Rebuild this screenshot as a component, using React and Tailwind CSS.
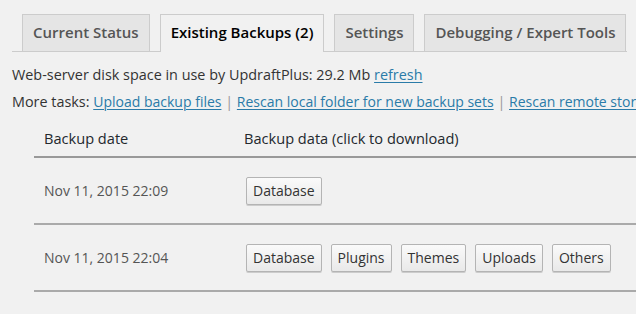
import React from "react";

const Tab = ({ children, active }) => (
  <div
    className={
      "h-[37px] px-[10px] border border-b-0 border-[#cccccc] text-[15px] font-semibold leading-[35px] " +
      (active ? "bg-[#f1f1f1] text-[#000000] -mb-px h-[38px]" : "bg-[#e5e5e5] text-[#555555]")
    }
  >
    {children}
  </div>
);

const Btn = ({ children }) => (
  <button className="h-[28px] px-[6px] border border-[#b4b4b4] rounded-[2px] bg-gradient-to-b from-[#fafafa] to-[#e9e9e9] text-[14px] text-[#333333] leading-[26px] shadow-[0_1px_0_#cccccc]">
    {children}
  </button>
);

const Link = ({ children, small }) => (
  <a
    className={
      "text-[#2a7ba8] underline underline-offset-2 decoration-1 cursor-pointer " +
      (small ? "text-[14px]" : "")
    }
  >
    {children}
  </a>
);

export default function App() {
  const rows = [
    { date: "Nov 11, 2015 22:09", items: ["Database"] },
    { date: "Nov 11, 2015 22:04", items: ["Database", "Plugins", "Themes", "Uploads", "Others"] },
  ];
  return (
    <div
      className="w-[636px] h-[314px] overflow-hidden bg-[#f1f1f1] pl-[12px]"
      style={{ fontFamily: '"Open Sans", "Noto Sans", sans-serif' }}
    >
      <div className="pt-[14px] w-[615px] flex items-end gap-[10px] pl-[10px] border-b border-[#cccccc] h-[52px]">
        <Tab>Current Status</Tab>
        <Tab active>Existing Backups (2)</Tab>
        <Tab>Settings</Tab>
        <Tab>Debugging / Expert Tools</Tab>
      </div>
      <div className="text-[14.4px] leading-[27px] text-[#333333] pt-[9px] whitespace-nowrap">
        <div>
          Web-server disk space in use by UpdraftPlus: 29.2 Mb <Link>refresh</Link>
        </div>
        <div>
          More tasks: <Link small>Upload backup files</Link> <span className="text-[#999999]">|</span>{" "}
          <Link small>Rescan local folder for new backup sets</Link>{" "}
          <span className="text-[#999999]">|</span> <Link small>Rescan remote storage</Link>
        </div>
      </div>
      <div className="ml-[22px] w-[620px] text-[14px]">
        <div className="flex h-[43px] border-b-2 border-[#999999] text-[#23282d] text-[14.6px] pt-[13px] leading-[20px]">
          <div className="w-[200px] pl-[10px]">Backup date</div>
          <div className="pl-[10px] whitespace-nowrap">Backup data (click to download)</div>
        </div>
        {rows.map((r, i) => (
          <div key={i} className="flex items-center h-[67px] border-b-2 border-[#aaaaaa]">
            <div className="w-[200px] pl-[10px] text-[#555555]">{r.date}</div>
            <div className="pl-[12px] flex gap-[9px]">
              {r.items.map((it) => (
                <Btn key={it}>{it}</Btn>
              ))}
            </div>
          </div>
        ))}
      </div>
    </div>
  );
}
